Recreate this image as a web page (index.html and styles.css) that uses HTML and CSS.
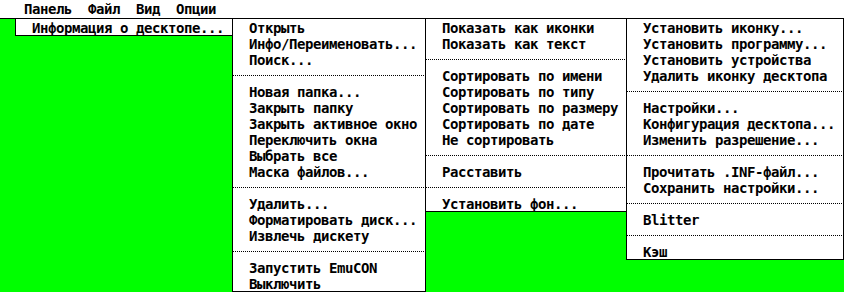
FILE: index.html
```html
<!DOCTYPE html>
<html lang="ru">
<head>
<meta charset="utf-8">
<title>EmuTOS desktop menus</title>
<link rel="stylesheet" href="styles.css">
</head>
<body>
<div class="bar">
  <span class="title">Панель</span>
  <span class="title">Файл</span>
  <span class="title">Вид</span>
  <span class="title">Опции</span>
</div>
<div class="menus">
  <div class="menu m1">
    <div class="item">Информация о десктопе...</div>
  </div>
  <div class="menu m2">
    <div class="item">Открыть</div>
    <div class="item">Инфо/Переименовать...</div>
    <div class="item">Поиск...</div>
    <div class="sep"></div>
    <div class="item">Новая папка...</div>
    <div class="item">Закрыть папку</div>
    <div class="item">Закрыть активное окно</div>
    <div class="item">Переключить окна</div>
    <div class="item">Выбрать все</div>
    <div class="item">Маска файлов...</div>
    <div class="sep"></div>
    <div class="item">Удалить...</div>
    <div class="item">Форматировать диск...</div>
    <div class="item">Извлечь дискету</div>
    <div class="sep"></div>
    <div class="item">Запустить EmuCON</div>
    <div class="item">Выключить</div>
  </div>
  <div class="menu m3">
    <div class="item">Показать как иконки</div>
    <div class="item">Показать как текст</div>
    <div class="sep"></div>
    <div class="item">Сортировать по имени</div>
    <div class="item">Сортировать по типу</div>
    <div class="item">Сортировать по размеру</div>
    <div class="item">Сортировать по дате</div>
    <div class="item">Не сортировать</div>
    <div class="sep"></div>
    <div class="item">Расставить</div>
    <div class="sep"></div>
    <div class="item">Установить фон...</div>
  </div>
  <div class="menu m4">
    <div class="item">Установить иконку...</div>
    <div class="item">Установить программу...</div>
    <div class="item">Установить устройства</div>
    <div class="item">Удалить иконку десктопа</div>
    <div class="sep"></div>
    <div class="item">Настройки...</div>
    <div class="item">Конфигурация десктопа...</div>
    <div class="item">Изменить разрешение...</div>
    <div class="sep"></div>
    <div class="item">Прочитать .INF-файл...</div>
    <div class="item">Сохранить настройки...</div>
    <div class="sep"></div>
    <div class="item">Blitter</div>
    <div class="sep"></div>
    <div class="item">Кэш</div>
  </div>
</div>
</body>
</html>
```
FILE: styles.css
```css
html, body {
  margin: 0;
  padding: 0;
  width: 844px;
  height: 292px;
  overflow: hidden;
  background: #00ff00;
}
body {
  font-family: "DejaVu Sans Mono", "Liberation Mono", monospace;
  font-weight: bold;
  font-size: 14px;
  letter-spacing: -0.4287px;
  color: #000;
}
.bar {
  display: flex;
  height: 18px;
  background: #fff;
  border-bottom: 1px solid #000;
  padding-left: 16px;
}
.title {
  padding: 1px 8px 0;
  line-height: 16px;
  white-space: pre;
}
.menus {
  display: flex;
  align-items: flex-start;
  padding-left: 15px;
}
.menu {
  background: #fff;
  border: 1px solid #000;
  border-top: 0;
}
.menu + .menu {
  margin-left: -1px;
}
.m1 { width: 216px; }
.m2 { width: 192px; }
.m3 { width: 200px; }
.m4 { width: 216px; }
.item {
  box-sizing: border-box;
  height: 16px;
  padding: 1px 0 0 16px;
  line-height: 16px;
  white-space: pre;
}
.sep {
  height: 16px;
  background-image: repeating-linear-gradient(90deg, #000 0 1px, transparent 1px 2px);
  background-size: 100% 1px;
  background-position: 0 8px;
  background-repeat: no-repeat;
}
```
